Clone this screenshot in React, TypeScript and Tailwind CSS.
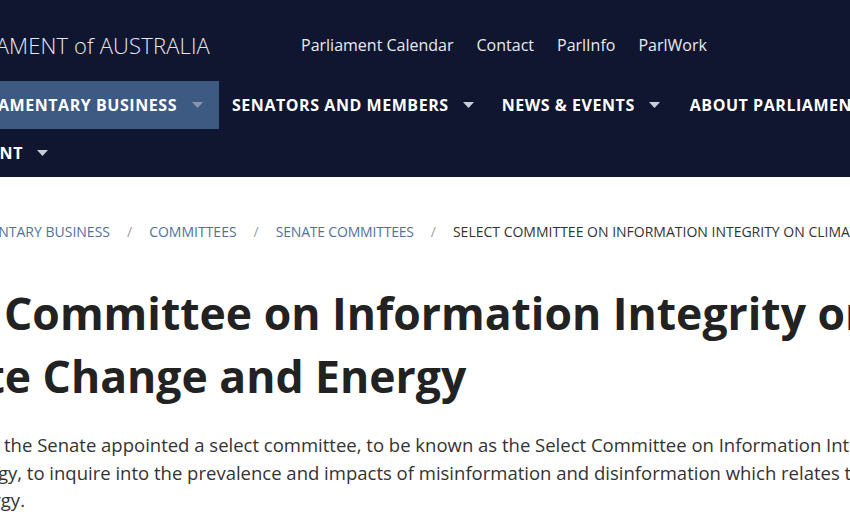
import React from "react";

function Caret({ className }: { className: string }) {
  return (
    <svg width="11" height="6" viewBox="0 0 11 6" className={className}>
      <path d="M0 0 H11 L5.5 6 Z" fill="currentColor" />
    </svg>
  );
}

// right-aligned box that clips whatever runs past its left edge
function Clip({ className, children }: { className: string; children: React.ReactNode }) {
  return (
    <div className={"flex shrink-0 justify-end overflow-hidden " + className}>
      <span className="shrink-0 whitespace-nowrap">{children}</span>
    </div>
  );
}

export default function App() {
  return (
    <div className="w-[850px] h-[520px] overflow-hidden bg-white font-['Open_Sans',sans-serif]">
      {/* Header */}
      <header className="bg-[#101630] h-[177px] text-white">
        {/* Top row */}
        <div className="flex h-[81px] items-center pt-[8px] whitespace-nowrap">
          <Clip className="w-[210px] text-[22px] font-light tracking-[0.15px] text-[#e6e8ee] leading-[28px]">
            PARLIAMENT of AUSTRALIA
          </Clip>
          <nav className="ml-[91px] flex gap-[23px] text-[16px] leading-[24px] text-[#e8eaf0]">
            <span>Parliament Calendar</span>
            <span>Contact</span>
            <span>ParlInfo</span>
            <span>ParlWork</span>
          </nav>
        </div>

        {/* Main nav row 1 */}
        <div className="flex h-[48px] whitespace-nowrap text-[16px] font-bold tracking-[0.55px] uppercase">
          <div className="flex w-[219px] shrink-0 justify-end overflow-hidden bg-[#3c5a82]">
            <div className="flex shrink-0 items-center gap-[15px] pr-[16px]">
              <span>Parliamentary Business</span>
              <Caret className="text-[#8893a8]" />
            </div>
          </div>
          <div className="flex shrink-0 items-center gap-[14px] px-[13px]">
            <span>Senators and Members</span>
            <Caret className="text-[#c9cdd8]" />
          </div>
          <div className="flex shrink-0 items-center gap-[14px] px-[15px]">
            <span>News &amp; Events</span>
            <Caret className="text-[#c9cdd8]" />
          </div>
          <div className="flex shrink-0 items-center gap-[14px] px-[15px]">
            <span>About Parliament</span>
            <Caret className="text-[#c9cdd8]" />
          </div>
        </div>

        {/* Main nav row 2 */}
        <div className="flex h-[48px] whitespace-nowrap text-[16px] font-bold tracking-[0.55px] uppercase">
          <div className="flex w-[63px] shrink-0 justify-end overflow-hidden">
            <div className="flex shrink-0 items-center gap-[14px] pr-[15px]">
              <span>Visit Parliament</span>
              <Caret className="text-[#c9cdd8]" />
            </div>
          </div>
        </div>
      </header>

      {/* Content */}
      <main className="pt-[45px] whitespace-nowrap">
        {/* Breadcrumb */}
        <div className="flex text-[14px] leading-[20px] uppercase text-[#52709a]">
          <Clip className="w-[110px]">Home / Parliamentary Business</Clip>
          <span className="mx-[17px] text-[#9aa0a8]">/</span>
          <span className="shrink-0">Committees</span>
          <span className="mx-[17px] text-[#9aa0a8]">/</span>
          <span className="shrink-0 tracking-[-0.2px]">Senate Committees</span>
          <span className="mx-[17px] text-[#9aa0a8]">/</span>
          <span className="shrink-0 text-[#333]">
            Select Committee on Information Integrity on Climate Change and Energy
          </span>
        </div>

        {/* Title */}
        <h1 className="mt-[39px] text-[44.5px] leading-[63px] font-bold text-[#222]">
          <div className="pl-[4px]">Committee on Information Integrity on</div>
          <div className="flex">
            <Clip className="w-[31px]">Climate</Clip>
            <span className="whitespace-pre"> Change and Energy</span>
          </div>
        </h1>

        {/* Intro */}
        <div className="mt-[24px] text-[18.5px] leading-[27.5px] text-[#333]">
          <div className="pl-[4px]">
            the Senate appointed a select committee, to be known as the Select Committee on Information Integrity on Climate Change and
          </div>
          <div className="flex">
            <Clip className="w-[22px]">Energy,</Clip>
            <span className="whitespace-pre">
              {" "}to inquire into the prevalence and impacts of misinformation and disinformation which relates to climate change and
            </span>
          </div>
          <div className="flex">
            <Clip className="w-[25px]">energy.</Clip>
          </div>
        </div>
      </main>
    </div>
  );
}
